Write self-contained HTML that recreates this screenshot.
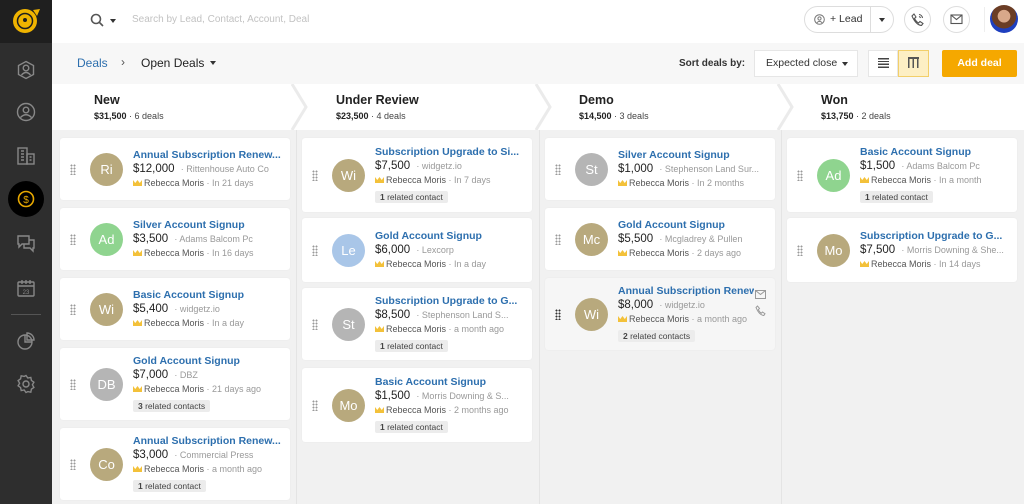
<!DOCTYPE html>
<html><head><meta charset="utf-8"><style>
*{margin:0;padding:0;box-sizing:border-box}
body{width:1024px;height:504px;overflow:hidden;font-family:"Liberation Sans",sans-serif;background:#f1f1f1;position:relative;color:#333}
.side{position:absolute;left:0;top:0;width:52px;height:504px;background:#2e2e2e}
.logo{position:absolute;left:0;top:0;width:52px;height:43px;background:#1f1f1f}
.ic{position:absolute;left:16px;width:20px;height:20px}
.top{position:absolute;left:52px;top:0;width:972px;height:43px;background:#fff}
.sub{position:absolute;left:52px;top:43px;width:972px;height:41px;background:#f7f7f7}
.hdr{position:absolute;left:52px;top:84px;width:972px;height:46px;background:#fff}
.colsep{position:absolute;top:130px;width:1px;height:374px;background:#e4e4e4}
.ch{position:absolute;top:93px;font-size:12.5px;font-weight:bold;color:#222}
.cs{position:absolute;top:111px;font-size:9px;color:#444}
.cs b{color:#222}
.card{position:absolute;background:#fff;border-radius:3px;width:230px;display:flex;align-items:center;box-shadow:0 0 1px rgba(0,0,0,.08)}
.dr{width:6px;height:11px;margin-left:10px;background-image:radial-gradient(circle,#999 0.9px,transparent 1.1px);background-size:3px 3px}
.av{width:33px;height:33px;border-radius:50%;margin-left:14px;color:#fff;font-size:13px;display:flex;align-items:center;justify-content:center;flex:none}
.tb{margin-left:10px;white-space:nowrap;overflow:hidden}
.tt{font-size:10.5px;font-weight:bold;color:#2d6fae;line-height:14px}
.pr{font-size:11.5px;color:#222;line-height:15px}
.pr span{font-size:9px;color:#999;margin-left:3px}
.mt{font-size:9px;color:#555;line-height:13px}
.mt span{color:#999}
.cr{display:inline-block;width:9px;height:6px;background:#f3c13a;margin-right:2px;clip-path:polygon(0 0,25% 50%,50% 0,75% 50%,100% 0,100% 100%,0 100%)}
.bd{display:inline-block;background:#ececec;font-size:8.5px;color:#444;padding:1px 5px;margin-top:2px;border-radius:2px}
.tan{background:#b8a97d}.grn{background:#8fd48f}.gry{background:#b5b5b5}.blu{background:#a9c6e8}
</style></head><body>
<div class="side">
 <div class="logo"><svg width="52" height="43"><circle cx="25" cy="21" r="12" fill="#f0b400"/><circle cx="25" cy="21" r="7.5" fill="none" stroke="#1f1f1f" stroke-width="1.5"/><path d="M33 10 L40 9 L37 16" fill="#f0b400"/><circle cx="25" cy="20" r="2" fill="#1f1f1f"/></svg></div>
 <svg class="ic" style="top:60px" viewBox="0 0 20 20" fill="none" stroke="#888" stroke-width="1.4"><path d="M10 1.5 L17.5 5.5 V14.5 L10 18.5 L2.5 14.5 V5.5Z"/><circle cx="10" cy="8" r="2.8"/><path d="M5.5 15 Q10 10 14.5 15"/></svg>
 <svg class="ic" style="top:102px" viewBox="0 0 20 20" fill="none" stroke="#888" stroke-width="1.4"><circle cx="10" cy="10" r="8.5"/><circle cx="10" cy="8" r="2.8"/><path d="M4.5 15.5 Q10 10 15.5 15.5"/></svg>
 <svg class="ic" style="top:146px" viewBox="0 0 20 20" fill="none" stroke="#888" stroke-width="1.4"><rect x="2" y="2" width="9" height="16"/><rect x="11" y="8" width="7" height="10"/><path d="M5 5h3M5 8h3M5 11h3M5 14h3M13.5 11h2M13.5 14h2"/></svg>
 <div style="position:absolute;left:8px;top:181px;width:36px;height:36px;border-radius:50%;background:#000"></div>
 <svg class="ic" style="top:189px" viewBox="0 0 20 20" fill="none" stroke="#e7a800" stroke-width="1.6"><circle cx="10" cy="10" r="7.5"/><text x="10" y="14" font-size="10" text-anchor="middle" fill="#e7a800" stroke="none" font-family="Liberation Sans">$</text></svg>
 <svg class="ic" style="top:233px" viewBox="0 0 20 20" fill="none" stroke="#888" stroke-width="1.4"><path d="M2 3h11v8H6l-3 3v-3H2z"/><path d="M13 7h5v8h-1v3l-3-3H8v-4"/></svg>
 <svg class="ic" style="top:278px" viewBox="0 0 20 20" fill="none" stroke="#888" stroke-width="1.4"><rect x="2" y="4" width="16" height="14" rx="1"/><path d="M2 8h16M6 2v4M10 2v4M14 2v4"/><text x="10" y="16" font-size="6" text-anchor="middle" fill="#888" stroke="none">23</text></svg>
 <div style="position:absolute;left:11px;top:314px;width:30px;height:1px;background:#555"></div>
 <svg class="ic" style="top:331px" viewBox="0 0 20 20" fill="none" stroke="#888" stroke-width="1.4"><circle cx="9" cy="11" r="7"/><path d="M9 4v7h7M11 2a7 7 0 0 1 7 7h-7z"/></svg>
 <svg class="ic" style="top:374px" viewBox="0 0 20 20" fill="none" stroke="#888" stroke-width="1.4"><circle cx="10" cy="10" r="3"/><path d="M10 1.5l1.8 2.5 3-.6.6 3 2.5 1.8-1.5 2.6 1.5 2.6-2.5 1.8-.6 3-3-.6L10 18.5 8.2 16l-3 .6-.6-3L2.1 11.8 3.6 9.2 2.1 6.6 4.6 4.8l.6-3 3 .6z"/></svg>
</div>
<div class="top">
 <svg style="position:absolute;left:38px;top:13px" width="14" height="14" fill="none" stroke="#555" stroke-width="1.6"><circle cx="6" cy="6" r="4.5"/><path d="M9.5 9.5l3.5 3.5"/></svg>
 <div style="position:absolute;left:58px;top:19px;border:3.5px solid transparent;border-top:4px solid #333"></div>
 <div style="position:absolute;left:80px;top:14px;font-size:10px;color:#c2c2c2">Search by Lead, Contact, Account, Deal</div>
 <div style="position:absolute;left:752px;top:6px;width:90px;height:27px;border:1px solid #ddd;border-radius:14px"></div>
 <div style="position:absolute;left:818px;top:6px;width:1px;height:27px;background:#ddd"></div>
 <svg style="position:absolute;left:762px;top:14px" width="11" height="11" fill="none" stroke="#777"><circle cx="5.5" cy="5.5" r="4.8"/><circle cx="5.5" cy="4.5" r="1.6"/><path d="M2.8 8.8Q5.5 6 8.2 8.8"/></svg>
 <div style="position:absolute;left:778px;top:13px;font-size:10.5px;color:#333">+ Lead</div>
 <div style="position:absolute;left:827px;top:18px;border:3.5px solid transparent;border-top:4px solid #333"></div>
 <div style="position:absolute;left:852px;top:6px;width:27px;height:27px;border:1px solid #ddd;border-radius:50%"></div>
 <svg style="position:absolute;left:859px;top:13px" width="13" height="13" fill="none" stroke="#555" stroke-width="1.1"><path d="M3 1l2 3-1.5 1.5q1.5 3 4 4.5L9 8.5l3 2-1.5 2Q5 12 1 3z"/><path d="M8 1.5a4 4 0 0 1 3.5 3.5M8 3.5a2 2 0 0 1 1.5 1.5"/></svg>
 <div style="position:absolute;left:891px;top:6px;width:27px;height:27px;border:1px solid #ddd;border-radius:50%"></div>
 <svg style="position:absolute;left:898px;top:14px" width="13" height="11" fill="none" stroke="#555" stroke-width="1.1"><rect x="1" y="1" width="11" height="8.5"/><path d="M1 1l5.5 4.5L12 1"/></svg>
 <div style="position:absolute;left:932px;top:7px;width:1px;height:25px;background:#eee"></div>
 <div style="position:absolute;left:938px;top:5px;width:28px;height:28px;border-radius:50%;background:radial-gradient(circle at 50% 40%,#d8a88a 0 28%,#6b3d25 30% 55%,#1e3fbf 57%)"></div>
</div>
<div class="sub">
 <div style="position:absolute;left:25px;top:13px;font-size:12px;color:#2d6fae">Deals</div>
 <div style="position:absolute;left:69px;top:12px;font-size:12px;color:#555">›</div>
 <div style="position:absolute;left:89px;top:13px;font-size:12px;color:#222">Open Deals</div>
 <div style="position:absolute;left:158px;top:18px;border:3.5px solid transparent;border-top:4px solid #333"></div>
 <div style="position:absolute;left:627px;top:15px;font-size:10px;font-weight:bold;color:#333">Sort deals by:</div>
 <div style="position:absolute;left:702px;top:7px;width:104px;height:27px;background:#fff;border:1px solid #e6e6e6"></div>
 <div style="position:absolute;left:714px;top:14px;font-size:10.5px;color:#333">Expected close</div>
 <div style="position:absolute;left:790px;top:19px;border:3.5px solid transparent;border-top:4px solid #333"></div>
 <div style="position:absolute;left:816px;top:7px;width:30px;height:27px;background:#fff;border:1px solid #e6e6e6"></div>
 <div style="position:absolute;left:826px;top:15px;width:11px;height:10px;background:repeating-linear-gradient(#444 0 1.4px,transparent 1.4px 2.8px)"></div>
 <div style="position:absolute;left:846px;top:7px;width:31px;height:27px;background:#fdefc4;border:1px solid #f2cf6a"></div>
 <div style="position:absolute;left:856px;top:14px;width:11px;height:11px;border-top:2px solid #555;background:repeating-linear-gradient(90deg,#555 0 1.5px,transparent 1.5px 4.5px)"></div>
 <div style="position:absolute;left:890px;top:7px;width:75px;height:27px;background:#f5a800;color:#fff;font-size:10.5px;font-weight:bold;text-align:center;line-height:27px;border-radius:2px">Add deal</div>
</div>
<div class="hdr">
 <svg width="972" height="46" style="position:absolute;left:0;top:0" fill="none" stroke="#ebebeb" stroke-width="3"><path d="M240 0l14 23-14 23M484 0l14 23-14 23M726 0l14 23-14 23"/></svg>
</div>
<div class="ch" style="left:94px">New</div><div class="cs" style="left:94px"><b>$31,500</b> · 6 deals</div>
<div class="ch" style="left:336px">Under Review</div><div class="cs" style="left:336px"><b>$23,500</b> · 4 deals</div>
<div class="ch" style="left:579px">Demo</div><div class="cs" style="left:579px"><b>$14,500</b> · 3 deals</div>
<div class="ch" style="left:821px">Won</div><div class="cs" style="left:821px"><b>$13,750</b> · 2 deals</div>
<div class="colsep" style="left:296px"></div><div class="colsep" style="left:539px"></div><div class="colsep" style="left:781px"></div>

<div class="card" style="left:60px;top:138px;height:62px"><div class="dr"></div><div class="av tan">Ri</div><div class="tb"><div class="tt">Annual Subscription Renew...</div><div class="pr">$12,000 <span>· Rittenhouse Auto Co</span></div><div class="mt"><i class="cr"></i>Rebecca Moris <span>· In 21 days</span></div></div></div>
<div class="card" style="left:60px;top:208px;height:62px"><div class="dr"></div><div class="av grn">Ad</div><div class="tb"><div class="tt">Silver Account Signup</div><div class="pr">$3,500 <span>· Adams Balcom Pc</span></div><div class="mt"><i class="cr"></i>Rebecca Moris <span>· In 16 days</span></div></div></div>
<div class="card" style="left:60px;top:278px;height:62px"><div class="dr"></div><div class="av tan">Wi</div><div class="tb"><div class="tt">Basic Account Signup</div><div class="pr">$5,400 <span>· widgetz.io</span></div><div class="mt"><i class="cr"></i>Rebecca Moris <span>· In a day</span></div></div></div>
<div class="card" style="left:60px;top:348px;height:72px"><div class="dr"></div><div class="av gry">DB</div><div class="tb"><div class="tt">Gold Account Signup</div><div class="pr">$7,000 <span>· DBZ</span></div><div class="mt"><i class="cr"></i>Rebecca Moris <span>· 21 days ago</span></div><div class="bd"><b>3</b> related contacts</div></div></div>
<div class="card" style="left:60px;top:428px;height:72px"><div class="dr"></div><div class="av tan">Co</div><div class="tb"><div class="tt">Annual Subscription Renew...</div><div class="pr">$3,000 <span>· Commercial Press</span></div><div class="mt"><i class="cr"></i>Rebecca Moris <span>· a month ago</span></div><div class="bd"><b>1</b> related contact</div></div></div>

<div class="card" style="left:302px;top:138px;height:74px"><div class="dr"></div><div class="av tan">Wi</div><div class="tb"><div class="tt">Subscription Upgrade to Si...</div><div class="pr">$7,500 <span>· widgetz.io</span></div><div class="mt"><i class="cr"></i>Rebecca Moris <span>· In 7 days</span></div><div class="bd"><b>1</b> related contact</div></div></div>
<div class="card" style="left:302px;top:218px;height:64px"><div class="dr"></div><div class="av blu">Le</div><div class="tb"><div class="tt">Gold Account Signup</div><div class="pr">$6,000 <span>· Lexcorp</span></div><div class="mt"><i class="cr"></i>Rebecca Moris <span>· In a day</span></div></div></div>
<div class="card" style="left:302px;top:288px;height:72px"><div class="dr"></div><div class="av gry">St</div><div class="tb"><div class="tt">Subscription Upgrade to G...</div><div class="pr">$8,500 <span>· Stephenson Land S...</span></div><div class="mt"><i class="cr"></i>Rebecca Moris <span>· a month ago</span></div><div class="bd"><b>1</b> related contact</div></div></div>
<div class="card" style="left:302px;top:368px;height:74px"><div class="dr"></div><div class="av tan">Mo</div><div class="tb"><div class="tt">Basic Account Signup</div><div class="pr">$1,500 <span>· Morris Downing &amp; S...</span></div><div class="mt"><i class="cr"></i>Rebecca Moris <span>· 2 months ago</span></div><div class="bd"><b>1</b> related contact</div></div></div>

<div class="card" style="left:545px;top:138px;height:62px"><div class="dr"></div><div class="av gry">St</div><div class="tb"><div class="tt">Silver Account Signup</div><div class="pr">$1,000 <span>· Stephenson Land Sur...</span></div><div class="mt"><i class="cr"></i>Rebecca Moris <span>· In 2 months</span></div></div></div>
<div class="card" style="left:545px;top:208px;height:62px"><div class="dr"></div><div class="av tan">Mc</div><div class="tb"><div class="tt">Gold Account Signup</div><div class="pr">$5,500 <span>· Mcgladrey &amp; Pullen</span></div><div class="mt"><i class="cr"></i>Rebecca Moris <span>· 2 days ago</span></div></div></div>
<div class="card" style="left:545px;top:278px;height:72px;background:#f6f6f6"><div class="dr" style="background-image:radial-gradient(circle,#333 0.9px,transparent 1.1px)"></div><div class="av tan">Wi</div><div class="tb" style="width:136px"><div class="tt">Annual Subscription Renew...</div><div class="pr">$8,000 <span>· widgetz.io</span></div><div class="mt"><i class="cr"></i>Rebecca Moris <span>· a month ago</span></div><div class="bd"><b>2</b> related contacts</div></div>
 <svg style="position:absolute;left:210px;top:12px" width="11" height="9" fill="none" stroke="#999"><rect x=".5" y=".5" width="10" height="8"/><path d="M.5 .5l5 4 5-4"/></svg>
 <svg style="position:absolute;left:210px;top:27px" width="11" height="11" fill="none" stroke="#999"><path d="M2.5 1l2 2.5-1.2 1.2q1.2 2.5 3 3.5l1.2-1.2 2.5 1.7-1.2 1.8Q4 10 1 2.5z"/></svg>
</div>

<div class="card" style="left:787px;top:138px;height:74px"><div class="dr"></div><div class="av grn">Ad</div><div class="tb"><div class="tt">Basic Account Signup</div><div class="pr">$1,500 <span>· Adams Balcom Pc</span></div><div class="mt"><i class="cr"></i>Rebecca Moris <span>· In a month</span></div><div class="bd"><b>1</b> related contact</div></div></div>
<div class="card" style="left:787px;top:218px;height:64px"><div class="dr"></div><div class="av tan">Mo</div><div class="tb"><div class="tt">Subscription Upgrade to G...</div><div class="pr">$7,500 <span>· Morris Downing &amp; She...</span></div><div class="mt"><i class="cr"></i>Rebecca Moris <span>· In 14 days</span></div></div></div>
</body></html>
